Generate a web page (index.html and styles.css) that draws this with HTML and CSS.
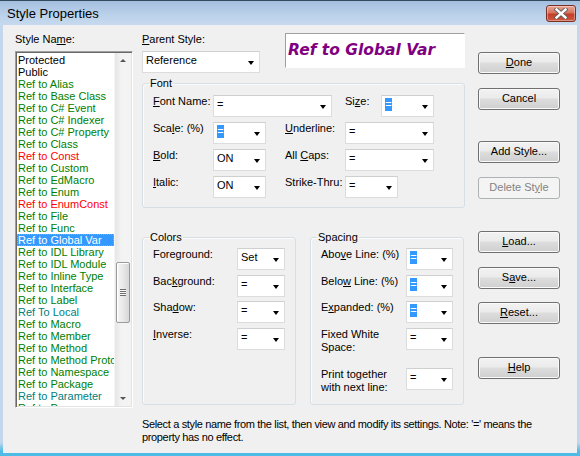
FILE: index.html
```html
<!DOCTYPE html>
<html>
<head>
<meta charset="utf-8">
<title>Style Properties</title>
<link rel="stylesheet" href="styles.css">
</head>
<body>
<div class="window">
  <div class="titlebar">
    <span class="title">Style Properties</span>
    <span class="close">
      <svg width="14" height="11" viewBox="0 0 14 11">
        <path d="M2.5 1.5 L11.5 9.5 M11.5 1.5 L2.5 9.5" stroke="#5a5a5a" stroke-width="4.2" stroke-linecap="square" fill="none"/>
        <path d="M2.5 1.5 L11.5 9.5 M11.5 1.5 L2.5 9.5" stroke="#ffffff" stroke-width="2.4" stroke-linecap="square" fill="none"/>
      </svg>
    </span>
  </div>
  <div class="client">
    <div class="col-left">
      <div class="lbl">Style Na<u>m</u>e:</div>
      <div class="listbox">
        <div class="items">
          <div class="it black">Protected</div>
          <div class="it black">Public</div>
          <div class="it green">Ref to Alias</div>
          <div class="it green">Ref to Base Class</div>
          <div class="it green">Ref to C# Event</div>
          <div class="it green">Ref to C# Indexer</div>
          <div class="it green">Ref to C# Property</div>
          <div class="it green">Ref to Class</div>
          <div class="it red">Ref to Const</div>
          <div class="it green">Ref to Custom</div>
          <div class="it green">Ref to EdMacro</div>
          <div class="it green">Ref to Enum</div>
          <div class="it red">Ref to EnumConst</div>
          <div class="it green">Ref to File</div>
          <div class="it green">Ref to Func</div>
          <div class="it sel">Ref to Global Var</div>
          <div class="it green">Ref to IDL Library</div>
          <div class="it green">Ref to IDL Module</div>
          <div class="it green">Ref to Inline Type</div>
          <div class="it green">Ref to Interface</div>
          <div class="it green">Ref to Label</div>
          <div class="it teal">Ref To Local</div>
          <div class="it green">Ref to Macro</div>
          <div class="it green">Ref to Member</div>
          <div class="it green">Ref to Method</div>
          <div class="it green">Ref to Method Prototype</div>
          <div class="it green">Ref to Namespace</div>
          <div class="it green">Ref to Package</div>
          <div class="it teal">Ref to Parameter</div>
          <div class="it green">Ref to Process</div>
        </div>
        <div class="vscroll">
          <div class="arrow up"></div>
          <div class="track">
            <div class="thumb"><span class="grip"></span></div>
          </div>
          <div class="arrow down"></div>
        </div>
      </div>
    </div>

    <div class="col-main">
      <div class="upper">
        <div class="col-mid">
          <div class="top-row">
            <div class="parent">
              <div class="lbl"><u>P</u>arent Style:</div>
              <div class="combo w118"><span class="val">Reference</span><span class="dd"></span></div>
            </div>
            <div class="preview">Ref to Global Var</div>
          </div>

          <fieldset class="group font">
            <legend>Font</legend>
            <div class="rows g5">
              <div class="row">
                <span class="flbl w60"><u>F</u>ont Name:</span>
                <div class="combo w119"><span class="val">=</span><span class="dd"></span></div>
                <span class="flbl size">Si<u>z</u>e:</span>
                <div class="combo w53"><span class="val"><span class="hl">=</span></span><span class="dd"></span></div>
              </div>
              <div class="row">
                <span class="flbl w60">Sca<u>l</u>e: (%)</span>
                <div class="combo w53"><span class="val"><span class="hl">=</span></span><span class="dd"></span></div>
                <span class="flbl w60 c2"><u>U</u>nderline:</span>
                <div class="combo w89"><span class="val">=</span><span class="dd"></span></div>
              </div>
              <div class="row">
                <span class="flbl w60"><u>B</u>old:</span>
                <div class="combo w53"><span class="val">ON</span><span class="dd"></span></div>
                <span class="flbl w60 c2">All <u>C</u>aps:</span>
                <div class="combo w89"><span class="val">=</span><span class="dd"></span></div>
              </div>
              <div class="row">
                <span class="flbl w60"><u>I</u>talic:</span>
                <div class="combo w53"><span class="val">ON</span><span class="dd"></span></div>
                <span class="flbl w60 c2">Strike-Thru:</span>
                <div class="combo w53"><span class="val">=</span><span class="dd"></span></div>
              </div>
            </div>
          </fieldset>

          <div class="bottom-groups">
            <fieldset class="group small">
              <legend>Colors</legend>
              <div class="rows">
                <div class="row">
                  <span class="flbl w84">Foreground:</span>
                  <div class="combo w48"><span class="val">Set</span><span class="dd"></span></div>
                </div>
                <div class="row m5">
                  <span class="flbl w84">Bac<u>k</u>ground:</span>
                  <div class="combo w48"><span class="val">=</span><span class="dd"></span></div>
                </div>
                <div class="row m4">
                  <span class="flbl w84">Sha<u>d</u>ow:</span>
                  <div class="combo w48"><span class="val">=</span><span class="dd"></span></div>
                </div>
                <div class="row m5">
                  <span class="flbl w84"><u>I</u>nverse:</span>
                  <div class="combo w48"><span class="val">=</span><span class="dd"></span></div>
                </div>
              </div>
            </fieldset>
            <fieldset class="group small">
              <legend>Spacing</legend>
              <div class="rows">
                <div class="row">
                  <span class="flbl w85">Abo<u>v</u>e Line: (%)</span>
                  <div class="combo w47"><span class="val"><span class="hl">=</span></span><span class="dd"></span></div>
                </div>
                <div class="row m5">
                  <span class="flbl w85">Belo<u>w</u> Line: (%)</span>
                  <div class="combo w47"><span class="val"><span class="hl">=</span></span><span class="dd"></span></div>
                </div>
                <div class="row m4">
                  <span class="flbl w85">E<u>x</u>panded: (%)</span>
                  <div class="combo w47"><span class="val"><span class="hl">=</span></span><span class="dd"></span></div>
                </div>
                <div class="row m5">
                  <span class="flbl w85">Fixed White<br>Space:</span>
                  <div class="combo w47"><span class="val">=</span><span class="dd"></span></div>
                </div>
                <div class="row m14">
                  <span class="flbl w85">Print together<br>with next line:</span>
                  <div class="combo w47"><span class="val">=</span><span class="dd"></span></div>
                </div>
              </div>
            </fieldset>
          </div>
        </div>

        <div class="col-buttons">
          <div class="btn b-done"><u>D</u>one</div>
          <div class="btn b-cancel">Cancel</div>
          <div class="btn b-add">Add Style...</div>
          <div class="btn b-del disabled">Delete St<u>y</u>le</div>
          <div class="btn b-load"><u>L</u>oad...</div>
          <div class="btn b-save">S<u>a</u>ve...</div>
          <div class="btn b-reset"><u>R</u>eset...</div>
          <div class="btn b-help"><u>H</u>elp</div>
        </div>
      </div>
      <div class="note">Select a style name from the list, then view and modify its settings. Note: '=' means the<br>property has no effect.</div>
    </div>
  </div>
</div>
</body>
</html>
```

FILE: styles.css
```css
* { box-sizing: border-box; }
html, body { margin: 0; padding: 0; }
body {
  width: 580px;
  height: 456px;
  overflow: hidden;
  font-family: "Liberation Sans", Arial, sans-serif;
  font-size: 11px;
  line-height: 13px;
  color: #000;
}
u { text-decoration: underline; text-underline-offset: 1px; }

.window {
  width: 580px;
  height: 456px;
  display: flex;
  flex-direction: column;
  background: linear-gradient(#c3d7ed, #c3d7ed 97%, #4dbbe6 99%);
  border-top: 1px solid #34495c;
}

.titlebar {
  height: 24px;
  flex: none;
  display: flex;
  align-items: flex-start;
  justify-content: space-between;
  background: linear-gradient(#a4bfdf, #bcd2ea 60%, #c6d9ee);
}
.title {
  font-size: 13px;
  line-height: 16px;
  padding: 5px 0 0 7px;
}
.close {
  margin: 4px 4px 0 0;
  width: 30px;
  height: 17px;
  border: 1px solid #7a3024;
  border-radius: 3px;
  background: linear-gradient(#e9a898, #d5735e 45%, #c13f28 55%, #cf5a42);
  box-shadow: inset 0 0 0 1px rgba(255,255,255,0.35);
  display: flex;
  align-items: center;
  justify-content: center;
}
.close svg { display: block; }

.client {
  flex: 1;
  margin: 0 3px 3px 3px;
  background: #f0f0f0;
  display: flex;
  padding: 8px 0 0 12px;
}

.lbl { height: 13px; margin-bottom: 5px; white-space: nowrap; }

/* list */
.col-left { width: 118px; flex: none; }
.listbox {
  width: 118px;
  height: 357px;
  display: flex;
  background: #fff;
  border: 1px solid;
  border-color: #a0a0a0 #ffffff #ffffff #a0a0a0;
  box-shadow: inset 1px 1px 0 #696969, inset -1px -1px 0 #e3e3e3;
  padding: 1px;
  overflow: hidden;
}
.items { flex: 1; overflow: hidden; padding-top: 1px; }
.it { height: 12px; line-height: 12px; padding-left: 1px; white-space: nowrap; overflow: hidden; }
.black { color: #000; }
.green { color: #008000; }
.red { color: #ff0000; }
.teal { color: #008080; }
.sel {
  background: #3399ff;
  color: #fff;
  outline: 1px dotted #e89a3c;
  outline-offset: -1px;
}
.vscroll {
  width: 17px;
  flex: none;
  display: flex;
  flex-direction: column;
  background: linear-gradient(90deg, #e6e6e6, #f3f3f3 40%, #f3f3f3);
  border-left: 1px solid #f5f5f5;
}
.arrow { height: 17px; flex: none; position: relative; }
.arrow::after {
  content: "";
  position: absolute;
  left: 5px;
  width: 0; height: 0;
  border-left: 3.5px solid transparent;
  border-right: 3.5px solid transparent;
}
.arrow.up::after { top: 6px; border-bottom: 3.5px solid #555; }
.arrow.down::after { top: 8px; border-top: 3.5px solid #555; }
.track { flex: 1; padding-top: 192px; }
.thumb {
  margin-left: 1px;
  width: 14px;
  height: 61px;
  border: 1px solid #9b9b9b;
  border-radius: 2px;
  background: linear-gradient(90deg, #f5f5f5, #e9e9e9 50%, #d6d6d6);
  box-shadow: inset 1px 1px 0 #fff;
  display: flex;
  align-items: center;
  justify-content: center;
}
.grip {
  width: 6px;
  height: 7px;
  background: repeating-linear-gradient(#6e6e6e 0 1px, #f8f8f8 1px 2px);
}

/* middle */
.col-main { margin-left: 9px; display: flex; flex-direction: column; }
.upper { display: flex; }
.col-mid { width: 323px; flex: none; }
.top-row { display: flex; align-items: flex-start; }
.parent { width: 118px; }
.preview {
  margin-left: 25px;
  width: 180px;
  height: 35px;
  background: #fff;
  border: 1px solid;
  border-color: #a0a0a0 #ffffff #ffffff #a0a0a0;
  color: #800080;
  font-family: "DejaVu Sans", Verdana, sans-serif;
  font-weight: bold;
  font-style: italic;
  font-size: 15.5px;
  line-height: 20px;
  padding: 6px 0 0 2px;
  white-space: nowrap;
}

.combo {
  height: 22px;
  background: #fff;
  border: 1px solid #dcdcdc;
  border-top-color: #cfcfcf;
  position: relative;
  flex: none;
  padding: 2px 0 0 3px;
  white-space: nowrap;
}
.val { display: inline-block; line-height: 13px; }
.hl { display: inline-block; background: #3399ff; color: #fff; width: 7px; text-align: center; }
.dd {
  position: absolute;
  right: 5px;
  top: 9px;
  width: 0; height: 0;
  border-left: 3.5px solid transparent;
  border-right: 3.5px solid transparent;
  border-top: 4px solid #000;
}
.w118 { width: 118px; }
.w119 { width: 119px; }
.w53 { width: 53px; }
.w89 { width: 89px; }
.w48 { width: 48px; }
.w47 { width: 47px; }

.group {
  margin: 0;
  border: 1px solid #d5dfe5;
  border-radius: 3px;
  box-shadow: inset 1px 1px 0 #fbfbfb;
  min-width: 0;
}
.group legend {
  padding: 0 1px;
  margin-left: -4px;
  line-height: 13px;
  font-size: 11px;
}
.group.font {
  margin-top: 4px;
  width: 323px;
  padding: 5px 0 9px 10px;
}
.rows { display: flex; flex-direction: column; }
.rows.g5 { gap: 5px; }
.row { display: flex; align-items: flex-start; }
.row.m4 { margin-top: 4px; }
.row.m5 { margin-top: 5px; }
.row.m14 { margin-top: 14px; }
.flbl { flex: none; white-space: nowrap; line-height: 13px; }
.w60 { width: 60px; }
.w84 { width: 84px; }
.w85 { width: 85px; }
.size { margin-left: 13px; width: 36px; }
.c2 { margin-left: 19px; }

.bottom-groups { display: flex; gap: 14px; margin-top: 23px; width: 322px; }
.group.small { width: 154px; padding: 4px 0 10px 10px; }

/* buttons */
.col-buttons { margin-left: 13px; width: 82px; display: flex; flex-direction: column; }
.btn {
  height: 22px;
  flex: none;
  border: 1px solid #707070;
  border-radius: 3px;
  background: linear-gradient(#f2f2f2, #ebebeb 45%, #dddddd 50%, #cfcfcf);
  box-shadow: inset 0 0 0 1px #fafafa;
  text-align: center;
  line-height: 19px;
  white-space: nowrap;
}
.btn.disabled {
  border-color: #adb2b5;
  background: #f4f4f4;
  box-shadow: none;
  color: #838383;
}
.b-done { margin-top: 19px; }
.b-cancel { margin-top: 14px; }
.b-add { margin-top: 31px; }
.b-del { margin-top: 14px; }
.b-load { margin-top: 32px; }
.b-save { margin-top: 14px; }
.b-reset { margin-top: 13px; }
.b-help { margin-top: 33px; }

.note { margin-top: 13px; white-space: nowrap; line-height: 13px; letter-spacing: -0.35px; }
```
